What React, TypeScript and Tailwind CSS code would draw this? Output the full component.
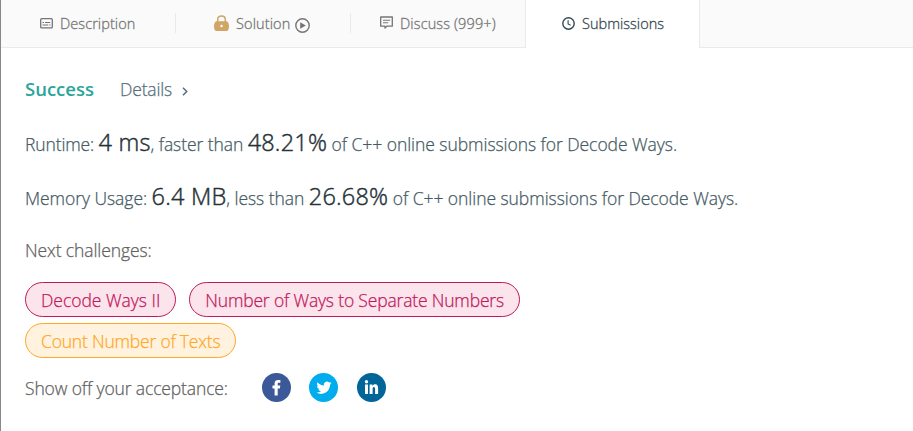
import React from "react";

function DescriptionIcon() {
  return (
    <svg className="h-[11px] w-[13px]" viewBox="0 0 13 11" fill="none" stroke="currentColor">
      <rect x="0.7" y="0.7" width="11.6" height="9.2" rx="1" strokeWidth="1.3" />
      <path d="M2.5 4.5H4M5 4.5H10.2M2.5 7H8.3M9.3 7H10.5" strokeWidth="1.1" />
    </svg>
  );
}

function LockIcon() {
  return (
    <svg className="h-[16px] w-[15px]" viewBox="0 0 15 16">
      <path d="M3.7 7V4.4C3.7 2.1 5.3 1 7.5 1S11.3 2.1 11.3 4.4V7" fill="none" stroke="#cfa666" strokeWidth="1.5" />
      <path d="M2.5 6.2H12.5C14 6.2 15 9 15 11.5S14 16 12.8 16H2.2C1 16 0 14 0 11.5S1 6.2 2.5 6.2Z" fill="#cfa666" />
      <circle cx="7.5" cy="11" r="1.2" fill="#fff" />
    </svg>
  );
}

function PlayIcon() {
  return (
    <svg className="h-[15px] w-[15px]" viewBox="0 0 15 15">
      <circle cx="7.5" cy="7.5" r="6.7" fill="none" stroke="currentColor" strokeWidth="1.4" />
      <path d="M5.2 4.3L10.8 7.5L5.2 10.7Z" fill="currentColor" />
    </svg>
  );
}

function DiscussIcon() {
  return (
    <svg className="h-[13px] w-[13px]" viewBox="0 0 13 13" fill="none" stroke="currentColor">
      <path d="M0.7 1H12.3V10.2H6.8L5 12V10.2H0.7Z" strokeWidth="1.3" strokeLinejoin="round" />
      <path d="M3 4.2H10.2M3 6.8H8.2" strokeWidth="1.1" />
    </svg>
  );
}

function ClockIcon() {
  return (
    <svg className="h-[13px] w-[13px]" viewBox="0 0 13 13" fill="none" stroke="currentColor" strokeWidth="1.4">
      <circle cx="6.5" cy="6.5" r="5.7" />
      <path d="M6.1 3.2V6.9L8.6 8.3" strokeWidth="1.1" />
    </svg>
  );
}

function Tabs() {
  return (
    <nav className="flex h-12 text-[14.5px] leading-[22px] text-[#757575] [-webkit-text-stroke:0.3px]">
      <div className="flex w-[174px] border-b border-[#eaeaea] bg-[#fafafa] pl-[39px]">
        <span className="pt-[18px]"><DescriptionIcon /></span>
        <span className="ml-[7px] pt-[13px] tracking-[0.07px]">Description</span>
      </div>
      <div className="flex w-[175px] border-b border-[#eaeaea] bg-[#fafafa]">
        <span className="mt-[13px] h-5 w-px bg-[#eaeaea]" />
        <span className="ml-[38px] pt-[15px]"><LockIcon /></span>
        <span className="ml-[7px] w-[59px] pt-[13px] tracking-[0.12px]">Solution</span>
        <span className="pt-[18px]"><PlayIcon /></span>
      </div>
      <div className="flex w-[176px] border-b border-r border-[#eaeaea] bg-[#fafafa]">
        <span className="mt-[13px] h-5 w-px bg-[#eaeaea]" />
        <span className="ml-[29px] pt-[16px]"><DiscussIcon /></span>
        <span className="ml-[7px] pt-[13px] tracking-[0.13px]">Discuss (999+)</span>
      </div>
      <div className="flex w-[173px] bg-white pl-[36px] text-[#37474f]">
        <span className="pt-[17px]"><ClockIcon /></span>
        <span className="ml-[7px] pt-[13px] tracking-[0.02px]">Submissions</span>
      </div>
      <div className="flex-1 border-b border-l border-[#eaeaea] bg-[#fafafa]" />
    </nav>
  );
}

function Pill({ label, className }: { label: string; className: string }) {
  return (
    <a className={`flex h-[35px] items-center rounded-full border px-[15px] pt-px leading-[35px] ${className}`}>
      {label}
    </a>
  );
}

function Strong({ children }: { children: React.ReactNode }) {
  return (
    <span className="text-[23.5px] tracking-[0.2px] text-[#263238] [-webkit-text-stroke:0.45px]">{children}</span>
  );
}

function Facebook() {
  return (
    <svg className="h-[29px] w-[29px]" viewBox="0 0 29 29">
      <circle cx="14.5" cy="14.5" r="14.5" fill="#3b5998" />
      <path d="M12.6 22.4V15.4H10.5V12.5H12.6V10.4C12.6 8 14 6.9 16 6.9H18.4V9.8H16.9C15.9 9.8 15.7 10.3 15.7 11V12.5H18.3L17.9 15.4H15.7V22.4Z" fill="#fff" />
    </svg>
  );
}

function Twitter() {
  return (
    <svg className="h-[29px] w-[29px]" viewBox="0 0 29 29">
      <circle cx="14.5" cy="14.5" r="14.5" fill="#00aced" />
      <path
        transform="translate(7.4 7.2) scale(0.63)"
        d="M23.95 4.57a10 10 0 0 1-2.82.77 4.96 4.96 0 0 0 2.16-2.72c-.95.55-2 .96-3.13 1.18a4.92 4.92 0 0 0-8.38 4.48C7.69 8.1 4.07 6.13 1.64 3.16a4.92 4.92 0 0 0 1.52 6.57 4.9 4.9 0 0 1-2.23-.61v.06a4.92 4.92 0 0 0 3.95 4.83 5 5 0 0 1-2.21.08 4.94 4.94 0 0 0 4.6 3.42A9.87 9.87 0 0 1 0 19.54a13.99 13.99 0 0 0 7.55 2.21c9.05 0 14-7.5 14-13.98 0-.21 0-.42-.02-.63a9.94 9.94 0 0 0 2.42-2.57Z"
        fill="#fff"
      />
    </svg>
  );
}

function LinkedIn() {
  return (
    <svg className="h-[29px] w-[29px]" viewBox="0 0 29 29">
      <circle cx="14.5" cy="14.5" r="14.5" fill="#006699" />
      <circle cx="9.5" cy="8.8" r="1.7" fill="#fff" />
      <path d="M8 11.6H11V21H8ZM12.6 11.6H15.4V12.9C15.9 12 16.9 11.3 18.2 11.3C20.5 11.3 21.1 13.1 21.1 15.6V21H18.1V16.2C18.1 15 18 13.9 16.9 13.9S15.6 15 15.6 16.2V21H12.6Z" fill="#fff" />
    </svg>
  );
}

export default function App() {
  return (
    <main className="h-[431px] w-[913px] overflow-hidden border-l border-[#888888] bg-white font-['Open_Sans','Noto_Sans',sans-serif] font-light whitespace-nowrap">
      <Tabs />
      <section className="pl-[24px] text-[17.5px] leading-6 tracking-[-0.05px] text-[#455a64] [-webkit-text-stroke:0.25px]">
        <div className="mt-[29px] flex h-6 items-baseline">
          <span className="w-[95px] text-[18.5px] font-semibold tracking-normal text-[#2ba59a] [-webkit-text-stroke:0px]">Success</span>
          <span className="w-[62px] tracking-[-0.15px] text-[#546e7a]">Details</span>
          <svg className="h-[9px] w-[6px]" viewBox="0 0 6 9" fill="none" stroke="#546e7a" strokeWidth="1.5">
            <path d="M1 0.8L4.7 4.5L1 8.2" />
          </svg>
        </div>
        <p className="mt-[25px] h-[32px] leading-8">
          <span className="tracking-[-0.12px]">Runtime: </span>
          <Strong>4 ms</Strong>
          <span className="tracking-[-0.08px]">, faster than </span>
          <Strong>48.21%</Strong> of C++ online submissions for Decode Ways.
        </p>
        <p className="mt-[22px] h-[32px] leading-8">
          Memory Usage: <Strong>6.4 MB</Strong>, less than <Strong>26.68%</Strong> of C++ online submissions for Decode Ways.
        </p>
        <p className="mt-[26px] tracking-[-0.1px] text-[#616161]">Next challenges:</p>
        <div className="mt-[20px] flex w-[600px] flex-wrap gap-x-[13px] gap-y-[6px]">
          <Pill label="Decode Ways II" className="border-[#c2185b] bg-[#fce4ec] tracking-[-0.02px] text-[#c2185b]" />
          <Pill
            label="Number of Ways to Separate Numbers"
            className="border-[#c2185b] bg-[#fce4ec] tracking-[-0.17px] text-[#c2185b]"
          />
          <Pill label="Count Number of Texts" className="border-[#ffa726] bg-[#fff3e0] tracking-[-0.2px] text-[#ffa726]" />
        </div>
        <div className="mt-[15px] flex h-[29px] items-center">
          <span className="w-[237px] pt-px tracking-[-0.13px] text-[#616161]">Show off your acceptance:</span>
          <div className="flex">
            <Facebook />
            <span className="ml-[18px]"><Twitter /></span>
            <span className="ml-[19px]"><LinkedIn /></span>
          </div>
        </div>
      </section>
    </main>
  );
}
